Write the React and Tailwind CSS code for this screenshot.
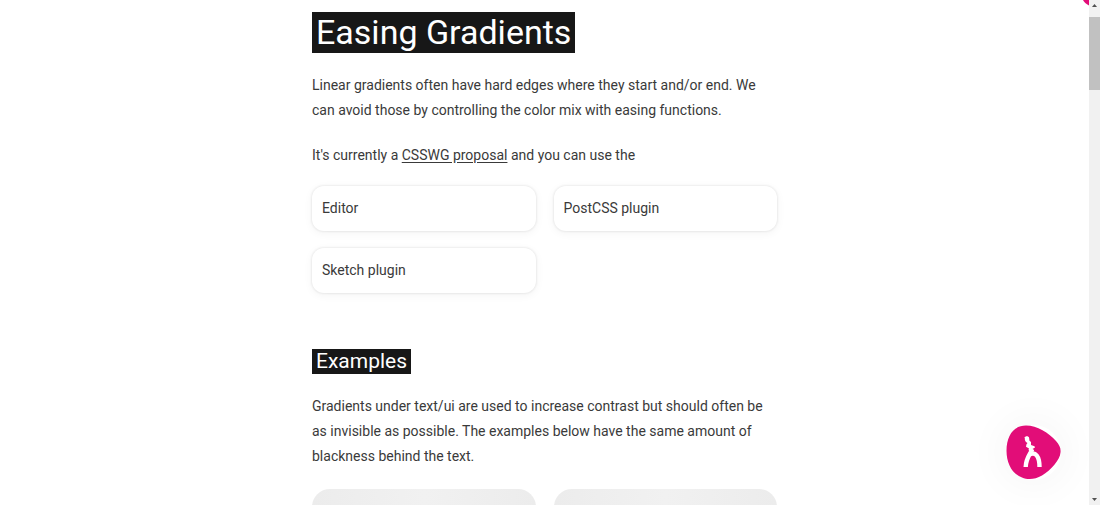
const links = ["Editor", "PostCSS plugin", "Sketch plugin"];

function Heading({ as: Tag, className, textClassName, children }) {
  return (
    <Tag className={className}>
      <span className={`inline-block bg-[#171717] px-1 font-normal text-white ${textClassName}`}>{children}</span>
    </Tag>
  );
}

function LinkCard({ label }) {
  return (
    <a
      href="#"
      className="rounded-xl bg-white px-[10px] py-[10px] shadow-[0_0_2px_1px_rgba(0,0,0,0.06),0_2px_10px_rgba(0,0,0,0.05)]"
    >
      {label}
    </a>
  );
}

function ExampleCard() {
  return <div className="h-40 rounded-[18px] bg-linear-to-r from-[#ececec] via-[#f1f1f1] to-[#ececec]" />;
}

function WalkerButton() {
  return (
    <button
      type="button"
      aria-label="Menu"
      className="absolute right-7 bottom-[25px] rounded-full shadow-[0_0_36px_10px_rgba(0,0,0,0.03)]"
    >
      <svg width="55" height="55" viewBox="0 0 55 55" className="block">
        <path
          d="M20 .5C31 .5 43 8 50 16c3.500 4 5 7 4.500 11.500C54 35 45 45 36 50.500c-7 4-14 4.500-20 2C6 49 .5 38 .5 26 .5 10 8 .5 20 .5Z"
          fill="#e20d78"
        />
        <path
          d="M18.300 13c.7-2.300 4.200-2.500 4.800-.3l.4 3 1.500 1.300v3l3.500 1.200.5 1.300-2.500 1.500 1.500 1-3 2.500-2.500-2.500.5-1.500-3-1.800.5-2.500 1-1.200c-1.700-.5-3-2.500-2.700-5Z"
          fill="#fff"
        />
        <path d="M26 24.500c-1 4-6 8-6.300 17.500M23.500 29.500c6-3.500 10 2 10 12.500" fill="none" stroke="#fff" strokeWidth="4.400" />
      </svg>
    </button>
  );
}

function Scrollbar() {
  return (
    <div aria-hidden="true" className="flex w-[11px] shrink-0 flex-col items-center bg-[#f1f1f1] py-1">
      <svg width="5" height="3" viewBox="0 0 5 3">
        <path d="M0 3 2.500 0 5 3Z" fill="#505050" />
      </svg>
      <div className="mt-[10px] h-[73px] w-full bg-[#c1c1c1]" />
      <svg width="5" height="3" viewBox="0 0 5 3" className="mt-auto">
        <path d="M0 0 2.500 3 5 0Z" fill="#505050" />
      </svg>
    </div>
  );
}

export default function App() {
  return (
    <div className="flex h-screen overflow-hidden bg-white font-['Roboto',sans-serif] text-[14px] leading-[25px] text-[#3a3a3a]">
      <div className="relative min-w-0 flex-1 overflow-hidden">
        <main className="mx-auto w-full max-w-[465px] pt-3">
          <Heading as="h1" className="flex" textClassName="text-[34px] leading-[41px]">Easing Gradients</Heading>
          <p className="mt-5">
            Linear gradients often have hard edges where they start and/or end. We can avoid those by controlling the
            color mix with easing functions.
          </p>
          <p className="mt-5">
            It's currently a{" "}
            <a href="#" className="underline underline-offset-2">CSSWG proposal</a>{" "}
            and you can use the
          </p>
          <nav className="mt-[18px] grid grid-cols-2 gap-x-[18px] gap-y-[17px]">
            {links.map((label) => (
              <LinkCard key={label} label={label} />
            ))}
          </nav>
          <Heading as="h2" className="mt-14 flex" textClassName="text-[21px] leading-[25px]">Examples</Heading>
          <p className="mt-5">
            Gradients under text/ui are used to increase contrast but should often be as invisible as possible. The
            examples below have the same amount of blackness behind the text.
          </p>
          <div className="mt-5 grid grid-cols-2 gap-[18px]">
            <ExampleCard />
            <ExampleCard />
          </div>
        </main>
        <svg width="6" height="6" viewBox="0 0 6 6" className="absolute top-0 right-0" aria-hidden="true">
          <path d="M0 0c1 2 3 4 6 5.500V0Z" fill="#e20d78" />
        </svg>
        <WalkerButton />
      </div>
      <Scrollbar />
    </div>
  );
}
